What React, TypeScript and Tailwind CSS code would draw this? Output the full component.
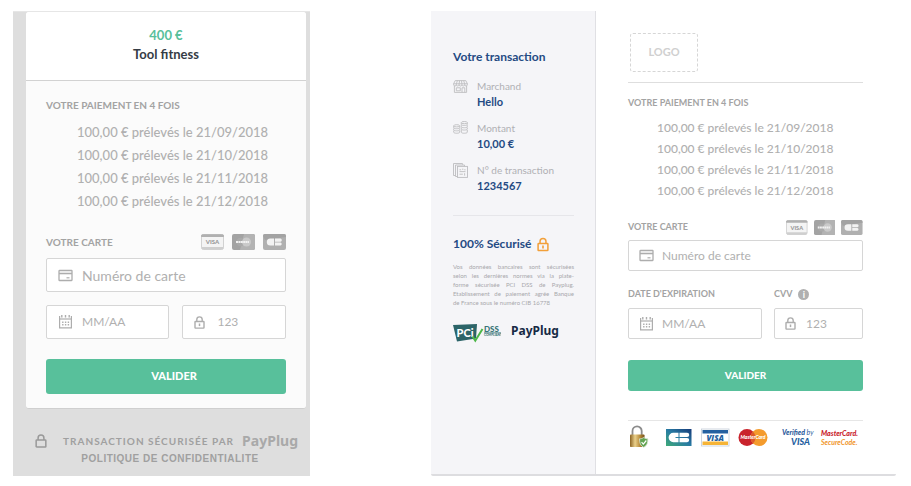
import type { ReactNode } from "react"

const dates = ["21/09/2018", "21/10/2018", "21/11/2018", "21/12/2018"]

const legalLines = [
  "Vos données bancaires sont sécurisées",
  "selon les dernières normes via la plate-",
  "forme sécurisée PCI DSS de Payplug.",
  "Etablissement de paiement agrée Banque",
]

const CardIcon = () => (
  <svg className="h-[13px] w-[15px] shrink-0" viewBox="0 0 15 13" fill="none" stroke="#adadad" strokeWidth="1.3" aria-hidden="true">
    <rect x="1" y="1.5" width="13" height="10" rx="0.4" />
    <path d="M1 4.5h13" strokeWidth="1.6" />
    <path d="M8.5 8.8h3" strokeWidth="1.2" />
  </svg>
)

const CalendarIcon = () => (
  <svg className="h-[14px] w-[15px] shrink-0" viewBox="0 0 15 14" fill="none" stroke="#adadad" aria-hidden="true">
    <path d="M1.600 1v11.900h11.800V1" strokeWidth="1.200" />
    <path d="M1 4h13" strokeWidth="1.200" />
    <path d="M3.800 0v2.600M7.500 0v2.600M11.200 0v2.600" strokeWidth="1.400" />
    <path d="M4.100 7.300h7M4.100 9.800h7" strokeWidth="1.500" strokeDasharray="1.400 1.400" />
  </svg>
)

const LockIcon = ({ color = "#adadad", className = "h-[13px] w-[11px]", keyhole = true }: { color?: string; className?: string; keyhole?: boolean }) => (
  <svg className={"shrink-0 " + className} viewBox="0 0 11 13" fill="none" stroke={color} strokeWidth="1.4" aria-hidden="true">
    <rect x="1" y="5.5" width="9" height="6.6" rx="0.6" />
    <path d="M2.8 5.5V3.6a2.7 2.7 0 0 1 5.4 0v1.9" />
    {keyhole && <path d="M5.5 7.5v2.6" strokeWidth="1.5" />}
  </svg>
)

const ShopIcon = () => (
  <svg className="mt-px h-[13px] w-[15px]" viewBox="0 0 15 13" fill="none" stroke="#bdbdc0" strokeWidth="0.9" aria-hidden="true">
    <path d="M2.2 0.6h10.6l1.6 3.2H0.6zM1.4 6v6.4h12.2V6" />
    <path d="M0.6 3.8v1c0 1.6 2.7 1.6 2.7 0 0 1.6 2.8 1.6 2.8 0 0 1.6 2.8 1.6 2.8 0 0 1.6 2.8 1.6 2.8 0 0 1.6 2.7 1.6 2.7 0v-1M4.4 0.6l-1 3.2v1M6.6 0.6l-.5 3.2v1M8.5 0.6l.4 3.2v1M10.6 0.6l1.1 3.2v1" />
    <path d="M3.3 7.8h4v3h-4zM9 12.4V7.8h2.8v4.6" />
  </svg>
)

const CoinsIcon = () => (
  <svg className="h-[13px] w-[15px]" viewBox="0 0 15 13" fill="none" stroke="#bdbdc0" strokeWidth="0.9" aria-hidden="true">
    <ellipse cx="3.7" cy="4.8" rx="3" ry="1.1" />
    <path d="M.7 5v1.7c0 1.4 6 1.4 6 0V5M.7 7.5v1.3c0 1.4 6 1.4 6 0V7.5M.7 9.6v1.6c0 1.4 6 1.4 6 0V9.6" />
    <ellipse cx="11.3" cy="1.6" rx="3" ry="1.1" />
    <path d="M8.3 1.8v1.6c0 1.4 6 1.4 6 0V1.8M8.3 4.2v1.5c0 1.4 6 1.4 6 0V4.2M8.3 6.5V8c0 1.4 6 1.4 6 0V6.5M8.3 8.9v2.3c0 1.4 6 1.4 6 0V8.9" />
  </svg>
)

const PapersIcon = () => (
  <svg className="h-[15px] w-[15px]" viewBox="0 0 15 15" fill="none" stroke="#bdbdc0" strokeWidth="0.9" aria-hidden="true">
    <path d="M2.5 12.5h-2V.5h9v1.2M4.5 13.5h-2V2h9v1.2" />
    <rect x="4.5" y="3.4" width="10" height="11" />
    <path d="M6.5 6.8h1.6M9 6.2h1.4M11.2 6.8h1.4M6.5 8.6h6M6.5 11.2h3.4M11.6 10.2v2.4" />
  </svg>
)

const GreyCards = ({ className }: { className: string }) => (
  <div className={"flex " + className} aria-hidden="true">
    <svg className="h-full" viewBox="0 0 23 16">
      <rect x="0.5" y="0.5" width="22" height="15" rx="2" fill="#f4f4f4" stroke="#d2d2d2" />
      <path d="M2 .3h19a1.7 1.7 0 0 1 1.7 2.6H.3A1.7 1.7 0 0 1 2 .3z" fill="#b0b0b0" />
      <path d="M.5 13h22v.8a1.8 1.8 0 0 1-2 1.800h-18a1.800 1.800 0 0 1-2-1.800z" fill="#cfcfcf" />
      <text x="11.500" y="10.300" textAnchor="middle" fontSize="6" fontWeight="900" fill="#999" fontFamily="Lato, sans-serif">VISA</text>
    </svg>
    <svg className="h-full" viewBox="0 0 23 16">
      <rect width="23" height="16" rx="2" fill="#a3a3a3" />
      <path d="M12 0h9a2 2 0 0 1 2 2v12a2 2 0 0 1-2 2H8z" fill="#b3b3b3" />
      <circle cx="8.5" cy="8" r="4.3" fill="#aaa" />
      <circle cx="14.5" cy="8" r="4.5" fill="#cacaca" />
      <path d="M4 8h13" stroke="#f1f1f1" strokeWidth="2.2" strokeDasharray="2 .4" />
    </svg>
    <svg className="h-full" viewBox="0 0 23 16">
      <rect width="23" height="16" rx="2" fill="#b0b0b0" />
      <path d="M0 2a2 2 0 0 1 2-2h19a2 2 0 0 1 2 2v1L2 6z" fill="#a3a3a3" />
      <path d="M11 4.500H7.300a3.500 3.500 0 0 0 0 7H11zM12 4.500h5.500a1.700 1.700 0 0 1 0 3.300H12zM12 8.400h5.500a1.600 1.600 0 0 1 0 3.100H12z" fill="#f3f3f3" />
    </svg>
  </div>
)

const Field = ({ id, placeholder, label, icon, className }: { id: string; placeholder: string; label?: string; icon: ReactNode; className: string }) => (
  <div className={"flex items-center rounded-[2px] border border-[#d6d6d6] bg-white " + className}>
    {icon}
    <input
      id={id}
      type="text"
      aria-label={label}
      placeholder={placeholder}
      className="w-full min-w-0 bg-transparent text-[#999] outline-none placeholder:text-[#b0b0b0]"
    />
  </div>
)

const Schedule = ({ className }: { className: string }) => (
  <ul className={"font-medium whitespace-nowrap text-[#b0b0b0] " + className}>
    {dates.map((date) => (
      <li key={date}>100,00 € prélevés le {date}</li>
    ))}
  </ul>
)

const MobilePayment = () => (
  <section className="min-w-0 border-t border-[#e6e6e6] bg-[#dedede] pr-1 pl-[13px]">
    {/* Payment card */}
    <form className="rounded-[3px] border-b border-[#cfcfcf] bg-[#fbfbfb]">
      <header className="rounded-t-[3px] border-b border-[#d2d2d2] bg-white pt-[14px] pb-4 text-center text-[13px] leading-[19px] font-bold">
        <p className="text-[#58c09b]">400 €</p>
        <h1 className="text-[#353c45]">Tool fitness</h1>
      </header>

      <div className="px-5 pt-4 pb-[14px]">
        <h2 className="text-[10px] leading-4 font-bold text-[#a3a3a3]">VOTRE PAIEMENT EN 4 FOIS</h2>
        <Schedule className="mt-2 pl-[31px] text-[13px] leading-[23px]" />

        <div className="mt-[21px] flex items-center justify-between">
          <label htmlFor="m-card" className="text-[10px] leading-4 font-bold text-[#a3a3a3]">VOTRE CARTE</label>
          <GreyCards className="h-4 gap-2" />
        </div>
        <Field id="m-card" placeholder="Numéro de carte" icon={<CardIcon />} className="mt-2 h-[34px] gap-[9px] pl-[11px] text-[14px]" />
        <div className="mt-[13px] grid grid-cols-[124fr_104fr] gap-[13px]">
          <Field id="m-date" label="Date d'expiration" placeholder="MM/AA" icon={<CalendarIcon />} className="h-[34px] gap-[9px] pl-[11px] text-[12px]" />
          <Field id="m-cvv" label="CVV" placeholder="123" icon={<LockIcon />} className="h-[34px] gap-3 pl-[11px] text-[12px]" />
        </div>
        <button type="button" className="mt-5 h-[35px] w-full rounded-[3px] bg-[#58c09b] pl-4 text-[11px] font-black text-white">VALIDER</button>
      </div>
    </form>

    {/* Footer */}
    <footer className="pt-[23px] pb-[6px] text-[10px] leading-[18px] font-bold whitespace-nowrap text-[#a0a0a0]">
      <p className="flex items-center justify-between pr-2 pl-[9px]">
        <LockIcon color="#999" className="h-[14px] w-3" keyhole={false} />
        <span className="pl-2 tracking-widest">TRANSACTION SÉCURISÉE PAR</span>
        <span className="font-['Noto_Sans'] text-[14px] text-[#a9a9a9]">PayPlug</span>
      </p>
      <p className="pl-2 text-center font-['Liberation_Sans'] tracking-wider">
        <a href="#confidentialite">POLITIQUE DE CONFIDENTIALITE</a>
      </p>
    </footer>
  </section>
)

const Detail = ({ icon, name, value }: { icon: ReactNode; name: string; value: string }) => (
  <div className="flex gap-[9px]">
    <span className="w-[15px] shrink-0">{icon}</span>
    <dl className="leading-[15px] whitespace-nowrap">
      <dt className="text-[10px] text-[#b0b0b4]">{name}</dt>
      <dd className="text-[11px] font-bold text-[#244a83]">{value}</dd>
    </dl>
  </div>
)

const PciLogo = () => (
  <svg className="h-5 w-12" viewBox="0 0 48 20" role="img" aria-label="PCI DSS compliant">
    <path d="M0 2 24 1l-1 14.500L4 18.500z" fill="#2c6468" />
    <text x="3.500" y="14" fontSize="11" fontWeight="900" fill="#fff" fontFamily="Lato, sans-serif">PCi</text>
    <path d="m19.500 13.500 2.800 4.200L29.500 6" fill="none" stroke="#4db748" strokeWidth="2" />
    <text x="31" y="8.500" fontSize="8" fontWeight="900" fill="#397578" fontFamily="Lato, sans-serif">DSS</text>
    <path d="M31 9.800h17" stroke="#397578" strokeWidth="0.800" />
    <text x="31" y="13" fontSize="3" fontWeight="900" fill="#397578" fontFamily="Lato, sans-serif">COMPLIANT</text>
  </svg>
)

const Sidebar = () => (
  <aside className="min-w-0 border-r border-[#e0e0e4] bg-[#f5f5f8] pt-[38px] pr-[21px] pl-[22px]">
    <h2 className="text-[12px] leading-4 font-bold whitespace-nowrap text-[#244a83]">Votre transaction</h2>
    <div className="mt-[14px] grid gap-3">
      <Detail icon={<ShopIcon />} name="Marchand" value="Hello" />
      <Detail icon={<CoinsIcon />} name="Montant" value="10,00 €" />
      <Detail icon={<PapersIcon />} name="N° de transaction" value="1234567" />
    </div>
    <div className="mt-[22px] border-t border-[#e6e6ea] pt-5">
      <h2 className="flex items-center gap-[6px] text-[12px] leading-4 font-bold whitespace-nowrap text-[#244a83]">
        100% Sécurisé
        <LockIcon color="#f2a03a" className="h-[15px] w-3" />
      </h2>
      <p className="mt-[10px] text-[6px] leading-[9px] whitespace-nowrap text-[#a8a8ac]">
        {legalLines.map((line) => (
          <span key={line} className="block text-justify [text-align-last:justify]">{line}</span>
        ))}
        <span className="block">de France sous le numéro CIB 16778</span>
      </p>
      <div className="mt-4 flex items-start gap-[10px]">
        <PciLogo />
        <span className="font-['Noto_Sans'] text-[12px] leading-4 font-bold text-[#172a45]">PayPlug</span>
      </div>
    </div>
  </aside>
)

const PaymentLogos = () => (
  <svg className="block w-full" viewBox="0 0 235 26" role="img" aria-label="Paiement sécurisé, CB, Visa, MasterCard">
    <defs>
      <linearGradient id="gold" x1="0" x2="1">
        <stop offset="0" stopColor="#8c6424" />
        <stop offset="0.35" stopColor="#ead08a" />
        <stop offset="0.7" stopColor="#b48838" />
        <stop offset="1" stopColor="#755018" />
      </linearGradient>
      <linearGradient id="cb" x1="0" y1="1" x2="1" y2="0">
        <stop offset="0" stopColor="#3faa78" />
        <stop offset="0.5" stopColor="#287ba3" />
        <stop offset="1" stopColor="#173c7a" />
      </linearGradient>
    </defs>
    <path d="M4.5 11V7a4.6 4.6 0 0 1 9.2 0v4" fill="none" stroke="#8c8c8c" strokeWidth="1.8" />
    <rect x="2" y="10.5" width="14.5" height="12.5" rx="0.8" fill="url(#gold)" />
    <path d="M15.7 13.5c1.4 1 2.8 1.3 4.2 1.3 0 4.5-1 7-4.2 8.5-3.200-1.500-4.200-4-4.200-8.500 1.400 0 2.800-.3 4.200-1.300z" fill="#62a452" stroke="#dfe8da" strokeWidth="0.8" />
    <path d="m13.600 18.200 1.700 1.900 3-3.600" fill="none" stroke="#fff" strokeWidth="1.200" />
    <rect x="38" y="5" width="25.500" height="17" fill="url(#cb)" />
    <path d="M50.500 8.800h-5.200a4.700 4.700 0 0 0 0 9.400h5.200v-4.200h-3v-1h3zM51.500 8.800h7.600a2.150 2.150 0 0 1 0 4.300h-7.600zM51.500 14h7.600a2.100 2.100 0 0 1 0 4.200h-7.600z" fill="#fff" />
    <rect x="73.500" y="5" width="27.500" height="17" fill="#fff" stroke="#c3ccd8" strokeWidth="0.800" />
    <path d="M74.500 6h25.500v3.500h-25.500z" fill="#2460a0" />
    <path d="M74.500 17.500h25.500v3.500h-25.500z" fill="#f6b436" />
    <text x="87.200" y="16.500" textAnchor="middle" fontSize="8" fontWeight="900" fontStyle="italic" fill="#2460a0" fontFamily="'Open Sans', sans-serif">VISA</text>
    <circle cx="119" cy="13.500" r="8.500" fill="#c9232c" />
    <circle cx="131" cy="13.500" r="8.500" fill="#f49b2d" />
    <path d="M125 7.500a8.500 8.500 0 0 1 0 12 8.500 8.500 0 0 1 0-12z" fill="#dd5a2c" />
    <text x="125" y="15.400" textAnchor="middle" fontSize="5" fontWeight="900" fontStyle="italic" fill="#fff" fontFamily="Lato, sans-serif">MasterCard</text>
    <text x="154" y="11" fontSize="7" fontWeight="900" fontStyle="italic" fill="#2c5c9c" fontFamily="Lato, sans-serif">Verified <tspan fontWeight="400">by</tspan></text>
    <text x="163" y="20.800" fontSize="9" fontWeight="900" fontStyle="italic" fill="#2460a0" fontFamily="Lato, sans-serif">VISA</text>
    <text x="193" y="11.500" fontSize="7" fontWeight="900" fontStyle="italic" fill="#c9232c" fontFamily="Lato, sans-serif">MasterCard.</text>
    <text x="193" y="20.500" fontSize="7" fontWeight="700" fontStyle="italic" fill="#f0962d" fontFamily="Lato, sans-serif">SecureCode.</text>
  </svg>
)

const DesktopPayment = () => (
  <section className="grid min-w-0 grid-cols-[165fr_300fr] rounded-[2px] border-b-2 border-[#dddde0] bg-white">
    <Sidebar />
    <form className="min-w-0 pt-[22px] pr-[33px] pb-6 pl-8">
      <div className="border-b border-[#dedede] pb-[10px]">
        <div className="ml-[2px] flex h-[39px] w-[68px] items-center justify-center rounded-[3px] border border-dashed border-[#d6d6d6] text-[11px] font-bold text-[#d0d0d0]">LOGO</div>
      </div>
      <h2 className="mt-3 text-[9px] leading-4 font-bold text-[#a3a3a3]">VOTRE PAIEMENT EN 4 FOIS</h2>
      <Schedule className="mt-[6px] pl-[29px] text-[12px] leading-[21px]" />

      <div className="mt-[18px] flex items-center justify-between">
        <label htmlFor="d-card" className="text-[9px] leading-4 font-bold text-[#a3a3a3]">VOTRE CARTE</label>
        <GreyCards className="h-[15px] gap-[6px]" />
      </div>
      <Field id="d-card" placeholder="Numéro de carte" icon={<CardIcon />} className="mt-[5px] h-[31px] gap-2 pl-[10px] text-[12px]" />
      <div className="mt-[15px] grid grid-cols-[134fr_89fr] gap-x-3 gap-y-[6px] text-[9px] leading-4 font-bold text-[#a3a3a3]">
        <label htmlFor="d-date">DATE D'EXPIRATION</label>
        <div className="flex items-center gap-[6px]">
          <label htmlFor="d-cvv">CVV</label>
          <button type="button" aria-label="Aide CVV" className="size-[11px] rounded-full bg-[#b0b0b0] leading-[11px] text-white">i</button>
        </div>
        <Field id="d-date" placeholder="MM/AA" icon={<CalendarIcon />} className="h-[31px] gap-2 pl-[10px] text-[12px] font-normal" />
        <Field id="d-cvv" placeholder="123" icon={<LockIcon />} className="h-[31px] gap-[10px] pl-[10px] text-[12px] font-normal" />
      </div>
      <button type="button" className="mt-[21px] h-[31px] w-full rounded-[3px] bg-[#58c09b] text-[10px] font-black text-white">VALIDER</button>
      <div className="mt-[29px] border-t border-[#e6e6e6] pt-[3px]">
        <PaymentLogos />
      </div>
    </form>
  </section>
)

const App = () => {
  return (
    <main className="grid grid-cols-[297fr_465fr] gap-x-[121px] bg-white py-[11px] pr-[15px] pl-[13px] font-['Lato',sans-serif]">
      <MobilePayment />
      <DesktopPayment />
    </main>
  )
}

export default App
